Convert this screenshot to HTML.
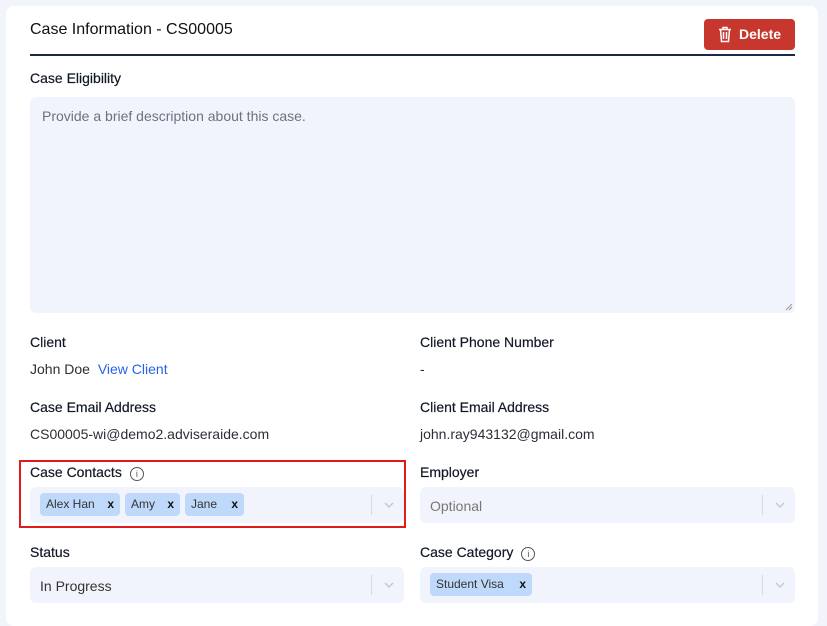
<!DOCTYPE html>
<html><head><style>
*{box-sizing:border-box;margin:0;padding:0}
body{width:827px;height:611px;background:#f1f4fb;font-family:"Liberation Sans",sans-serif;position:relative;overflow:hidden;color:#1f2937}
.card{position:absolute;left:6px;top:6px;width:812px;height:620px;background:#fff;border-radius:8px}
.a{position:absolute;white-space:nowrap}
.lbl{font-size:14px;color:#111827;font-weight:500;-webkit-text-stroke:0.2px #111827}
.val{font-size:14px;color:#2b2f36}
.box{position:absolute;background:#f1f4fc;border-radius:6px;height:36px}
.sep{position:absolute;right:32px;top:8px;width:1px;height:20px;background:#d6d9e0}
.chev{position:absolute;right:9px;top:13px}
.tag{position:absolute;top:6px;height:23px;background:#bfd9fb;border-radius:4px;font-size:12px;color:#333;line-height:23px;padding-left:6px}
.tag b{position:absolute;right:6px;font-size:12px;color:#111}
.info{display:inline-block;width:14px;height:14px;border:1px solid #555;border-radius:50%;font-size:9px;line-height:12px;text-align:center;vertical-align:0px;margin-left:8px;color:#555;-webkit-text-stroke:0}
</style></head><body>
<div class="card"></div>
<div class="a" style="left:30px;top:21px;font-size:16px;color:#111">Case Information - CS00005</div>
<div class="a" style="left:704px;top:19px;width:91px;height:31px;background:#c8372d;border-radius:4px;color:#fff;font-size:14px;font-weight:bold;line-height:31px;padding-left:35px">Delete</div>
<svg class="a" style="left:718px;top:26px" width="14" height="17" viewBox="0 0 14 17" fill="none" stroke="#fff" stroke-width="1.5"><path d="M1 3.5h12M5 3.5V1.5h4v2M2.5 3.5l1 12h7l1-12M5.5 6v7M8.5 6v7"/></svg>
<div class="a" style="left:30px;top:54px;width:765px;height:2px;background:#1b2a44"></div>
<div class="a lbl" style="left:30px;top:70px">Case Eligibility</div>
<div class="box" style="left:30px;top:97px;width:765px;height:216px"></div>
<div class="a" style="left:42px;top:108px;font-size:14px;color:#6b7280">Provide a brief description about this case.</div>
<svg class="a" style="left:785px;top:303px" width="8" height="8"><path d="M1 7L7 1M4 7L7 4" stroke="#999"/></svg>
<div class="a lbl" style="left:30px;top:334px">Client</div>
<div class="a val" style="left:30px;top:361px">John Doe <span style="color:#2563eb;margin-left:4px">View Client</span></div>
<div class="a lbl" style="left:420px;top:334px">Client Phone Number</div>
<div class="a val" style="left:420px;top:361px">-</div>
<div class="a lbl" style="left:30px;top:399px">Case Email Address</div>
<div class="a val" style="left:30px;top:426px">CS00005-wi@demo2.adviseraide.com</div>
<div class="a lbl" style="left:420px;top:399px">Client Email Address</div>
<div class="a val" style="left:420px;top:426px">john.ray943132@gmail.com</div>
<div class="a lbl" style="left:30px;top:464px">Case Contacts<span class="info">i</span></div>
<div class="a lbl" style="left:420px;top:464px">Employer</div>
<div class="box" style="left:30px;top:487px;width:374px">
 <div class="tag" style="left:10px;width:80px">Alex Han<b>x</b></div>
 <div class="tag" style="left:95px;width:55px">Amy<b>x</b></div>
 <div class="tag" style="left:155px;width:59px">Jane<b>x</b></div>
 <div class="sep"></div><svg class="chev" width="12" height="10"><path d="M2 3l4 4 4-4" stroke="#c5c8cf" fill="none" stroke-width="1.5"/></svg>
</div>
<div class="a" style="left:19px;top:460px;width:387px;height:68px;border:2px solid #e01b1b"></div>
<div class="box" style="left:420px;top:487px;width:375px"><div class="a" style="left:10px;top:11px;font-size:14px;color:#777">Optional</div>
 <div class="sep"></div><svg class="chev" width="12" height="10"><path d="M2 3l4 4 4-4" stroke="#c5c8cf" fill="none" stroke-width="1.5"/></svg></div>
<div class="a lbl" style="left:30px;top:544px">Status</div>
<div class="a lbl" style="left:420px;top:544px">Case Category<span class="info">i</span></div>
<div class="box" style="left:30px;top:567px;width:374px"><div class="a" style="left:10px;top:11px;font-size:14px;color:#333">In Progress</div>
 <div class="sep"></div><svg class="chev" width="12" height="10"><path d="M2 3l4 4 4-4" stroke="#c5c8cf" fill="none" stroke-width="1.5"/></svg></div>
<div class="box" style="left:420px;top:567px;width:375px">
 <div class="tag" style="left:10px;width:102px">Student Visa<b>x</b></div>
 <div class="sep"></div><svg class="chev" width="12" height="10"><path d="M2 3l4 4 4-4" stroke="#c5c8cf" fill="none" stroke-width="1.5"/></svg></div>
</body></html>
